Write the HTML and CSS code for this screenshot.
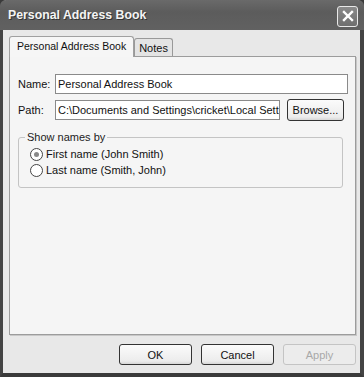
FILE: index.html
```html
<!DOCTYPE html>
<html>
<head>
<meta charset="utf-8">
<link rel="stylesheet" href="styles.css">
</head>
<body>
<div class="window">
  <div class="titlebar">
    <span class="title">Personal Address Book</span>
    <span class="close"><svg width="14" height="14" viewBox="0 0 14 14"><path d="M3 3 L11 11 M11 3 L3 11" stroke="#fff" stroke-width="2.4" stroke-linecap="square"/></svg></span>
  </div>
  <div class="client">
    <div class="tabs">
      <div class="tab active">Personal Address Book</div>
      <div class="tab">Notes</div>
    </div>
    <div class="panel">
      <div class="row">
        <span class="label">Name:</span>
        <div class="input wide">Personal Address Book</div>
      </div>
      <div class="row">
        <span class="label">Path:</span>
        <div class="input path">C:\Documents and Settings\cricket\Local Setti</div>
        <button class="btn browse">Browse...</button>
      </div>
      <fieldset class="group">
        <legend>Show names by</legend>
        <label class="radio"><span class="dot checked"></span>First name (John Smith)</label>
        <label class="radio"><span class="dot"></span>Last name (Smith, John)</label>
      </fieldset>
    </div>
    <div class="buttons">
      <button class="btn dlg">OK</button>
      <button class="btn dlg">Cancel</button>
      <button class="btn dlg disabled">Apply</button>
    </div>
  </div>
</div>
</body>
</html>
```
FILE: styles.css
```css
* { box-sizing: border-box; }
html, body { margin: 0; padding: 0; }
body {
  width: 364px; height: 377px; overflow: hidden;
  font-family: "Liberation Sans", Arial, sans-serif;
  font-size: 10.5px; color: #111;
  background: #3a3a3a;
}
.window {
  width: 364px; height: 377px;
  background: #e8e8e8;
  border-left: 3px solid #444;
  border-right: 4px solid #444;
  border-bottom: 4px solid #3a3a3a;
  border-radius: 6px 6px 0 0;
  display: flex; flex-direction: column;
}
.titlebar {
  height: 30px; margin: 0 -4px 0 -3px;
  background: linear-gradient(#6a6a6a, #5c5c5c 40%, #616161);
  border-radius: 6px 6px 0 0;
  display: flex; align-items: center; justify-content: space-between;
  padding: 0 6px 0 8px;
}
.title { color: #f4f4f4; font-weight: bold; font-size: 12.3px; text-shadow: 1px 1px 0 #333; }
.close {
  width: 21px; height: 21px; border: 1px solid #e8e8e8; border-radius: 3px;
  background: linear-gradient(#8a8a8a, #6e6e6e);
  display: flex; align-items: center; justify-content: center; margin-top: 2px;
}
.client { flex: 1; padding: 6px 4px 0 6px; display: flex; flex-direction: column; }
.tabs { display: flex; align-items: flex-end; height: 20px; position: relative; z-index: 1; }
.tab {
  border: 1px solid #999; border-bottom: none; border-radius: 3px 3px 0 0;
  background: #e4e4e4; padding: 3px 4px 0 4px; height: 18px; font-size: 11px;
}
.tab.active { background: #f6f6f6; height: 21px; padding: 3px 7px 0 7px; margin-bottom: -1px; border-color: #a0a0a0; font-size: 10.5px; }
.panel {
  height: 279px; border: 1px solid #9c9c9c; background: #f5f5f5;
  padding: 16px 7px 0 8px;
  box-shadow: 1px 1px 0 #c8c8c8;
}
.row { display: flex; align-items: center; margin-bottom: 5px; height: 21px; }
.label { width: 37px; font-size: 11px; }
.input {
  height: 20px; border: 1px solid #8a8a8a; background: #fff; padding: 3px 2px 0 2px;
  white-space: nowrap; overflow: hidden; font-size: 11px;
}
.input.wide { flex: 1; }
.input.path { width: 225px; }
.btn {
  font-family: inherit; font-size: 11px; color: #111;
  border: 1px solid #333; border-radius: 3px;
  background: linear-gradient(#fbfbfb, #ececec 85%, #d6d6d6);
  padding: 0;
}
.browse { width: 57px; height: 22px; margin-left: 7px; }
.group {
  margin: 11px 5px 0 0; padding: 3px 0 9px 11px;
  border: 1px solid #c4c4c4; border-radius: 3px;
}
.group legend { padding: 0 2px; margin-left: -5px; font-size: 11px; color: #222; }
.radio { display: flex; align-items: center; height: 16px; font-size: 11px; }
.dot {
  width: 13px; height: 13px; border: 1px solid #444; border-radius: 50%;
  background: #fff; margin-right: 3px; position: relative;
}
.dot.checked::after {
  content: ""; position: absolute; left: 3px; top: 3px; width: 5px; height: 5px;
  border-radius: 50%; background: #888;
}
.buttons { display: flex; justify-content: flex-end; gap: 9px; padding: 9px 0 0 0; }
.dlg { width: 73px; height: 21px; }
.dlg.disabled { border-color: #c4c4c4; color: #a8a8a8; background: #ececec; }
```
